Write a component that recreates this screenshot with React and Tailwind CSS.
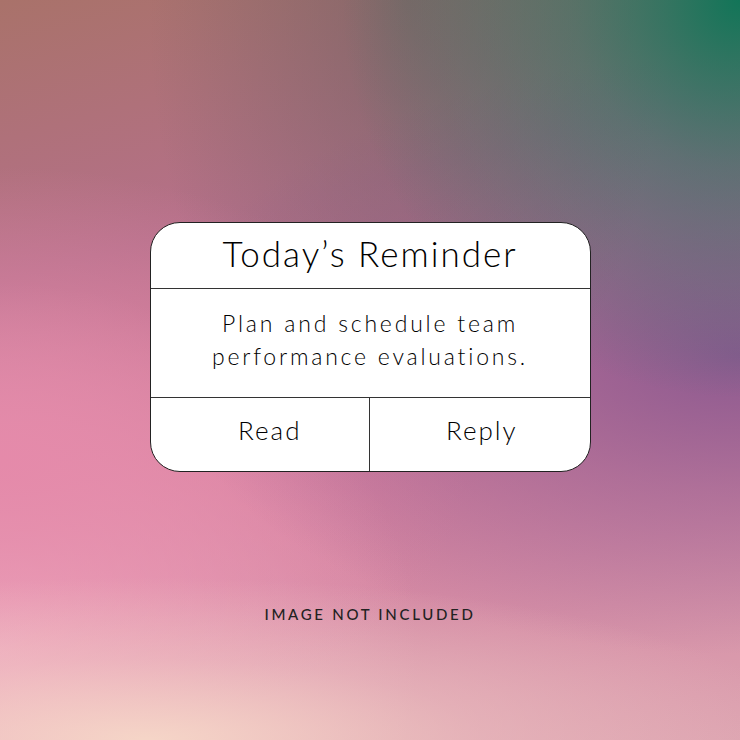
import React from 'react';

const Reminder = () => {
  return (
    <div className="w-[441px] h-[250px] flex flex-col bg-white border border-[#222] rounded-[30px] overflow-hidden text-black font-['Lato',sans-serif] font-light">
      <div className="h-[66px] flex items-center justify-center border-b border-[#333]">
        <h1 className="text-[35px] leading-none tracking-[2px] pb-1">Today’s Reminder</h1>
      </div>
      <div className="h-[109px] flex flex-col items-center justify-center border-b border-[#333] text-[23px] leading-[33px] tracking-[2.8px] pb-[6px]">
        <p>Plan and schedule team</p>
        <p>performance evaluations.</p>
      </div>
      <div className="flex-1 flex text-[26px] tracking-[2px]">
        <button className="w-1/2 flex items-center justify-center pl-5 pb-2 border-r border-[#333]">Read</button>
        <button className="w-1/2 flex items-center justify-center pl-1 pb-2">Reply</button>
      </div>
    </div>
  );
};

export default function App() {
  return (
    <div className="w-[740px] h-[740px] flex flex-col items-center bg-[radial-gradient(ellipse_90%_22%_at_20%_100%,rgba(246,216,200,0.95)_0%,rgba(240,200,196,0.5)_50%,transparent_100%),radial-gradient(ellipse_at_100%_0%,#127558_0%,rgba(18,117,88,0.5)_16%,transparent_38%),radial-gradient(ellipse_at_55%_0%,rgba(100,95,95,0.55)_0%,transparent_45%),radial-gradient(ellipse_at_100%_48%,#8c5a90_0%,rgba(140,90,144,0.5)_25%,transparent_55%),radial-gradient(ellipse_at_0%_62%,#e58aaa_0%,transparent_45%),radial-gradient(ellipse_at_0%_88%,#f2b0c4_0%,transparent_40%),linear-gradient(165deg,#a9726a_0%,#b5708a_30%,#cf7898_55%,#d48aa4_76%,#dca2b0_100%)]">
      <div className="h-[222px]" />
      <Reminder />
      <p className="mt-[131px] text-[15px] font-medium tracking-[2.7px] text-[#222] font-['Lato',sans-serif]">IMAGE NOT INCLUDED</p>
    </div>
  );
}
